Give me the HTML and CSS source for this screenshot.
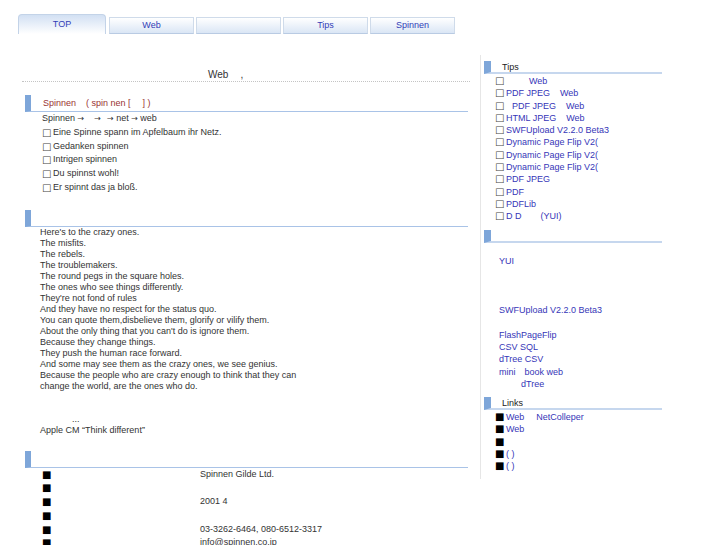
FILE: index.html
```html
<!DOCTYPE html>
<html lang="ja">
<head>
<meta charset="utf-8">
<title>Spinnen</title>
<link rel="stylesheet" href="styles.css">
</head>
<body>
<nav class="tabs">
  <a class="tab active" href="#">TOP</a>
  <a class="tab" href="#">Web</a>
  <a class="tab" href="#"></a>
  <a class="tab" href="#">Tips</a>
  <a class="tab" href="#">Spinnen</a>
</nav>
<div class="layout">
  <main class="main">
    <p class="lead">Web<span class="g g12"></span>,</p>

    <section class="sec">
      <h2 class="sec-head">Spinnen<span class="g g10"></span>( spin nen [<span class="g g12"></span>] )</h2>
      <div class="sec-body">
        <p class="row">Spinnen <span class="ar">→</span><span class="g g10"></span><span class="ar">→</span><span class="g g6"></span><span class="ar">→</span> net <span class="ar">→</span> web</p>
        <p class="row"><span class="cb">□</span>Eine Spinne spann im Apfelbaum ihr Netz.</p>
        <p class="row"><span class="cb">□</span>Gedanken spinnen</p>
        <p class="row"><span class="cb">□</span>Intrigen spinnen</p>
        <p class="row"><span class="cb">□</span>Du spinnst wohl!</p>
        <p class="row"><span class="cb">□</span>Er spinnt das ja bloß.</p>
      </div>
    </section>

    <section class="sec">
      <h2 class="sec-head"></h2>
      <p class="poem">Here's to the crazy ones.<br>
The misfits.<br>
The rebels.<br>
The troublemakers.<br>
The round pegs in the square holes.<br>
The ones who see things differently.<br>
They're not fond of rules<br>
And they have no respect for the status quo.<br>
You can quote them,disbelieve them, glorify or vilify them.<br>
About the only thing that you can't do is ignore them.<br>
Because they change things.<br>
They push the human race forward.<br>
And some may see them as the crazy ones, we see genius.<br>
Because the people who are crazy enough to think that they can<br>
change the world, are the ones who do.<br>
<br>
<br>
<span class="g g32"></span>...<br>
Apple CM “Think different”</p>
    </section>

    <section class="sec sec-last">
      <h2 class="sec-head"></h2>
      <dl class="info">
        <dt><span class="sq">■</span></dt><dd>Spinnen Gilde Ltd.</dd>
        <dt><span class="sq">■</span></dt><dd></dd>
        <dt><span class="sq">■</span></dt><dd>2001 4</dd>
        <dt><span class="sq">■</span></dt><dd></dd>
        <dt><span class="sq">■</span></dt><dd>03-3262-6464, 080-6512-3317</dd>
        <dt><span class="sq">■</span></dt><dd>info@spinnen.co.jp</dd>
      </dl>
    </section>
  </main>

  <aside class="side">
    <h3 class="side-head">Tips</h3>
    <ul class="side-list">
      <li><span class="cb">□</span><span class="g g23"></span><a href="#">Web</a></li>
      <li><span class="cb">□</span><a href="#">PDF JPEG<span class="g g10"></span>Web</a></li>
      <li><span class="cb">□</span><a href="#"><span class="g g6"></span>PDF JPEG<span class="g g10"></span>Web</a></li>
      <li><span class="cb">□</span><a href="#">HTML JPEG<span class="g g10"></span>Web</a></li>
      <li><span class="cb">□</span><a href="#">SWFUpload V2.2.0 Beta3</a></li>
      <li><span class="cb">□</span><a href="#">Dynamic Page Flip V2(</a></li>
      <li><span class="cb">□</span><a href="#">Dynamic Page Flip V2(</a></li>
      <li><span class="cb">□</span><a href="#">Dynamic Page Flip V2(</a></li>
      <li><span class="cb">□</span><a href="#">PDF JPEG</a></li>
      <li><span class="cb">□</span><a href="#">PDF</a></li>
      <li><span class="cb">□</span><a href="#">PDFLib</a></li>
      <li><span class="cb">□</span><a href="#">D D<span class="g g19"></span>(YUI)</a></li>
    </ul>

    <h3 class="side-head side-head-gap"></h3>
    <ul class="side-text">
      <li></li>
      <li><a href="#">YUI</a></li>
      <li></li>
      <li></li>
      <li></li>
      <li><a href="#">SWFUpload V2.2.0 Beta3</a></li>
      <li></li>
      <li><a href="#">FlashPageFlip</a></li>
      <li><a href="#">CSV SQL</a></li>
      <li><a href="#">dTree CSV</a></li>
      <li><a href="#">mini<span class="g g9"></span>book web</a></li>
      <li><span class="g g22"></span><a href="#">dTree</a></li>
    </ul>

    <h3 class="side-head side-head-links">Links</h3>
    <ul class="side-list">
      <li><span class="sq">■</span><a href="#">Web<span class="g g12"></span>NetColleper</a></li>
      <li><span class="sq">■</span><a href="#">Web</a></li>
      <li><span class="sq">■</span></li>
      <li><span class="sq">■</span><a href="#">( )</a></li>
      <li><span class="sq">■</span><a href="#">( )</a></li>
    </ul>
  </aside>
</div>
</body>
</html>
```

FILE: styles.css
```css
html, body {
  margin: 0;
  padding: 0;
  background: #fff;
}

body {
  font-family: "Liberation Sans", Arial, sans-serif;
  font-size: 9px;
  color: #333;
}

p, h2, h3, ul, dl, dd {
  margin: 0;
  padding: 0;
}

a {
  color: #3636b8;
  text-decoration: none;
}

/* blank gaps (where the original glyphs were not rendered) */
.g { display: inline-block; height: 1px; }
.g6 { width: 6px; }
.g7 { width: 7px; }
.g9 { width: 9px; }
.g10 { width: 10px; }
.g12 { width: 12px; }
.g19 { width: 19px; }
.g22 { width: 22px; }
.g23 { width: 23px; }
.g32 { width: 32px; }

.cb,
.sq {
  display: inline-block;
  vertical-align: top;
  width: 9px;
  font-family: "DejaVu Sans", sans-serif;
  font-size: 10px;
}

.cb { color: #444; }
.sq { color: #000; }

.ar {
  display: inline-block;
  vertical-align: top;
  font-family: "DejaVu Sans", sans-serif;
  font-size: 8px;
}

/* ---------- tabs ---------- */
.tabs {
  display: flex;
  align-items: flex-end;
  gap: 2px;
  height: 20px;
  padding: 14px 0 0 18px;
}

.tab {
  box-sizing: border-box;
  width: 85px;
  height: 17px;
  border: 1px solid #cfdbea;
  border-bottom-color: #b9cbe3;
  background: linear-gradient(#ffffff, #dae6f5);
  color: #3340b8;
  text-align: center;
  line-height: 15px;
}

.tab.active {
  width: 88px;
  height: 20px;
  margin-right: 1px;
  border-color: #c3d3e8;
  border-bottom: none;
  border-radius: 4px 4px 0 0;
  background: linear-gradient(#d2e0f3, #ffffff);
  line-height: 19px;
}

/* ---------- layout ---------- */
.layout {
  display: flex;
  align-items: flex-start;
}

.main {
  width: 448px;
  margin-left: 22px;
}

.lead {
  margin-top: 35px;
  padding-left: 186px;
  font-size: 10px;
  line-height: 12px;
  border-bottom: 1px dotted #c4c4c4;
}

.sec-head {
  box-sizing: border-box;
  height: 17px;
  margin: 13px 2px 0 3px;
  padding-left: 12px;
  border-left: 6px solid #7ea6d9;
  border-bottom: 1px solid #a9c3e7;
  color: #993333;
  font-size: 9px;
  font-weight: normal;
  line-height: 16px;
}

.sec + .sec .sec-head {
  margin-top: 15px;
}

.sec-last .sec-head {
  margin-top: 14px;
}

.sec-body {
  padding: 0 0 0 20px;
  line-height: 13.75px;
}

.sec-body .row {
  height: 13.75px;
  overflow: hidden;
}

.sec-body .cb {
  width: 11px;
}

.poem {
  padding-left: 18px;
  line-height: 11px;
}

.info {
  display: grid;
  grid-template-columns: 158px 1fr;
  grid-auto-rows: 13.8px;
  padding-left: 20px;
  line-height: 13.8px;
}

.info dt, .info dd {
  margin: 0;
}

/* ---------- sidebar ---------- */
.side {
  width: 185px;
  margin: 21px 0 0 10px;
  padding: 6px 0 6px;
  border-left: 1px solid #e6e6e6;
}

.side-head {
  box-sizing: border-box;
  width: 178px;
  height: 13px;
  margin-left: 3px;
  padding-left: 11px;
  border-left: 7px solid #7ea6d9;
  border-bottom: 2px solid #c6d7ee;
  color: #222;
  font-size: 9px;
  font-weight: normal;
  line-height: 12px;
}

.side-head-gap {
  margin-top: 7px;
}

.side-head-links {
  margin-top: 7px;
}

.side-list {
  list-style: none;
  padding: 1px 0 0 14px;
  line-height: 12.3px;
}

.side-list .cb,
.side-list .sq {
  width: 11px;
}

.side-list li {
  height: 12.3px;
}

.side-text {
  list-style: none;
  padding: 0 0 0 18px;
  line-height: 12.3px;
}

.side-text li {
  height: 12.3px;
}
```
